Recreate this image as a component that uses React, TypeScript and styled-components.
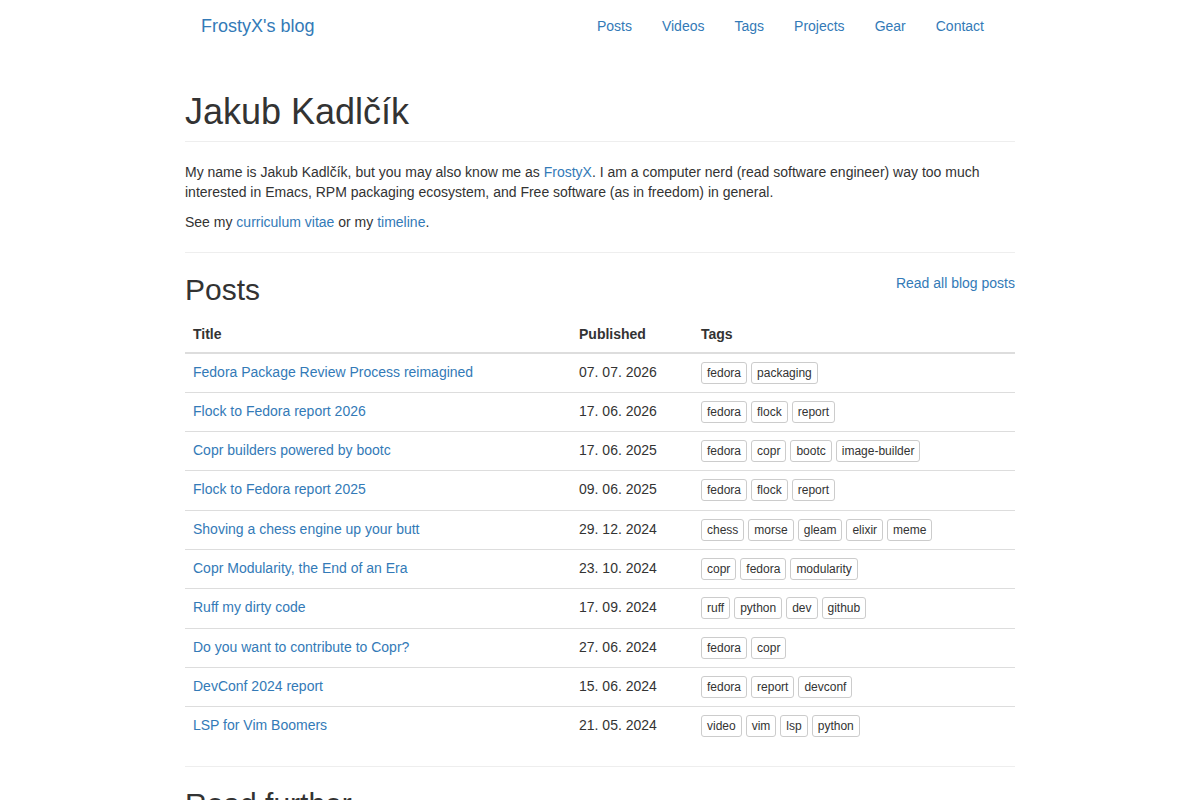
import React from 'react';
import styled, {createGlobalStyle} from 'styled-components';

const GlobalStyle = createGlobalStyle`
  * {
    box-sizing: border-box;
  }
  body {
    margin: 0;
    font-family: "Liberation Sans", Arial, sans-serif;
    font-size: 14px;
    line-height: 1.42857;
    color: #333;
    background: #fff;
  }
  a {
    color: #337ab7;
    text-decoration: none;
  }
`

const Navbar = styled.nav`
  height: 50px;
`

const NavInner = styled.div`
  width: 830px;
  margin: 0 auto;
  padding: 2px 16px 0 1px;
  display: flex;
  justify-content: space-between;
  align-items: center;
  height: 100%;
`

const Brand = styled.a`
  font-size: 18px;
  line-height: 20px;
  padding: 15px;
`

const NavLinks = styled.ul`
  display: flex;
  list-style: none;
  margin: 0;
  padding: 0;
`

const NavLink = styled.a`
  display: block;
  padding: 15px;
  line-height: 20px;
`

const Container = styled.main`
  width: 830px;
  margin: 0 auto;
`

const PageHeader = styled.div`
  margin: 42px 0 21px;
  padding-bottom: 9px;
  border-bottom: 1px solid #eee;
`

const H1 = styled.h1`
  margin: 0;
  font-size: 36px;
  font-weight: 500;
  line-height: 1.1;
`

const P = styled.p`
  margin: 0 0 10px;
`

const Rule = styled.hr`
  margin: 19px 0 20px;
  border: 0;
  border-top: 1px solid #eee;
`

const SectionHead = styled.div`
  display: flex;
  justify-content: space-between;
  align-items: flex-start;
  margin-bottom: 10px;
`

const ReadAll = styled.a`
  margin-top: 1px;
`

const H2 = styled.h2`
  margin: 0;
  font-size: 30px;
  font-weight: 500;
  line-height: 1.1;
`

const Table = styled.table`
  width: 100%;
  border-collapse: collapse;
  border-spacing: 0;
  margin-bottom: 20px;

  th {
    text-align: left;
    padding: 8px;
    line-height: 20px;
    font-weight: bold;
    border-bottom: 2px solid #ddd;
    vertical-align: bottom;
  }
  td {
    padding: 8px;
    line-height: 20px;
    vertical-align: top;
    border-top: 1px solid #ddd;
  }
  tbody tr:first-child td {
    border-top: 0;
  }
`

const Col = styled.col<{w: number}>`
  width: ${props => props.w}px;
`

const Tag = styled.span`
  display: inline-block;
  font-size: 12px;
  line-height: 16px;
  padding: 2px 5px;
  margin-right: 4px;
  border: 1px solid #ccc;
  border-radius: 3px;
  color: #333;
  background: #fff;
  vertical-align: top;
`

const TagList = styled.div`
  display: flex;
  flex-wrap: wrap;
  padding-bottom: 0.3px;
`

const posts: Array<[string, string, string[]]> = [
    ["Fedora Package Review Process reimagined", "07. 07. 2026", ["fedora", "packaging"]],
    ["Flock to Fedora report 2026", "17. 06. 2026", ["fedora", "flock", "report"]],
    ["Copr builders powered by bootc", "17. 06. 2025", ["fedora", "copr", "bootc", "image-builder"]],
    ["Flock to Fedora report 2025", "09. 06. 2025", ["fedora", "flock", "report"]],
    ["Shoving a chess engine up your butt", "29. 12. 2024", ["chess", "morse", "gleam", "elixir", "meme"]],
    ["Copr Modularity, the End of an Era", "23. 10. 2024", ["copr", "fedora", "modularity"]],
    ["Ruff my dirty code", "17. 09. 2024", ["ruff", "python", "dev", "github"]],
    ["Do you want to contribute to Copr?", "27. 06. 2024", ["fedora", "copr"]],
    ["DevConf 2024 report", "15. 06. 2024", ["fedora", "report", "devconf"]],
    ["LSP for Vim Boomers", "21. 05. 2024", ["video", "vim", "lsp", "python"]],
]

const App = () => {
    return (
        <>
            <GlobalStyle/>
            <Navbar>
                <NavInner>
                    <Brand href="#">FrostyX's blog</Brand>
                    <NavLinks>
                        {["Posts", "Videos", "Tags", "Projects", "Gear", "Contact"].map(item =>
                            <li key={item}><NavLink href="#">{item}</NavLink></li>
                        )}
                    </NavLinks>
                </NavInner>
            </Navbar>
            <Container>
                <PageHeader>
                    <H1>Jakub Kadlčík</H1>
                </PageHeader>
                <P>
                    My name is Jakub Kadlčík, but you may also know me as <a href="#">FrostyX</a>. I am a
                    computer nerd (read software engineer) way too much interested in Emacs, RPM packaging
                    ecosystem, and Free software (as in freedom) in general.
                </P>
                <P>
                    See my <a href="#">curriculum vitae</a> or my <a href="#">timeline</a>.
                </P>
                <Rule/>
                <SectionHead>
                    <H2>Posts</H2>
                    <ReadAll href="#">Read all blog posts</ReadAll>
                </SectionHead>
                <Table>
                    <colgroup>
                        <Col w={386}/>
                        <Col w={122}/>
                        <Col w={322}/>
                    </colgroup>
                    <thead>
                    <tr>
                        <th>Title</th>
                        <th>Published</th>
                        <th>Tags</th>
                    </tr>
                    </thead>
                    <tbody>
                    {posts.map(([title, date, tags]) =>
                        <tr key={title}>
                            <td><a href="#">{title}</a></td>
                            <td>{date}</td>
                            <td>
                                <TagList>
                                    {tags.map(tag => <Tag key={tag}>{tag}</Tag>)}
                                </TagList>
                            </td>
                        </tr>
                    )}
                    </tbody>
                </Table>
                <Rule/>
                <H2>Read further</H2>
            </Container>
        </>
    );
}

export default App;
